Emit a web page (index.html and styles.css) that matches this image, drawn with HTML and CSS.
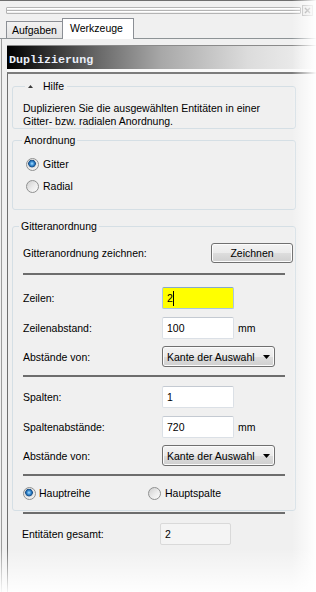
FILE: index.html
```html
<!DOCTYPE html>
<html lang="de">
<head>
<meta charset="utf-8">
<title>Duplizierung</title>
<link rel="stylesheet" href="styles.css">
</head>
<body>
<div class="topbar">
  <div class="grip"></div>
  <div class="close"><svg width="9" height="9" viewBox="0 0 9 9"><path d="M2 2L7 7M7 2L2 7" stroke="#777" stroke-width="1.4"/></svg></div>
</div>
<div class="tabs">
  <div class="tab">Aufgaben</div>
  <div class="tab active">Werkzeuge</div>
</div>
<div class="page">
<div class="title"><span>Duplizierung</span></div>
<div class="panel">
  <fieldset class="group help">
    <legend class="help-legend"><svg class="tri" width="5" height="3" viewBox="0 0 5 3"><polygon points="0,3 2.5,0 5,3" fill="#3a3a3a"/></svg>Hilfe</legend>
    <p class="help-text">Duplizieren Sie die ausgewählten Entitäten in einer<br>Gitter- bzw. radialen Anordnung.</p>
  </fieldset>
  <fieldset class="group arrange">
    <legend>Anordnung</legend>
    <div class="radio-row first"><span class="rb on"></span>Gitter</div>
    <div class="radio-row"><span class="rb"></span>Radial</div>
  </fieldset>
  <fieldset class="group grid">
    <legend>Gitteranordnung</legend>
    <div class="row r-btn"><span class="lbl">Gitteranordnung zeichnen:</span><button class="btn">Zeichnen</button></div>
    <div class="sep s1"></div>
    <div class="row r1"><span class="lbl">Zeilen:</span><span class="field focus">2<span class="caret"></span></span></div>
    <div class="row r2"><span class="lbl">Zeilenabstand:</span><span class="field">100</span><span class="unit">mm</span></div>
    <div class="row r3"><span class="lbl">Abstände von:</span><span class="combo">Kante der Auswahl<svg class="arrow" width="7" height="4" viewBox="0 0 7 4"><polygon points="0,0 7,0 3.5,4" fill="#000"/></svg></span></div>
    <div class="sep s2"></div>
    <div class="row r4"><span class="lbl">Spalten:</span><span class="field">1</span></div>
    <div class="row r5"><span class="lbl">Spaltenabstände:</span><span class="field">720</span><span class="unit">mm</span></div>
    <div class="row r6"><span class="lbl">Abstände von:</span><span class="combo">Kante der Auswahl<svg class="arrow" width="7" height="4" viewBox="0 0 7 4"><polygon points="0,0 7,0 3.5,4" fill="#000"/></svg></span></div>
    <div class="sep s3"></div>
    <div class="row radios"><span class="opt o1"><span class="rb on"></span>Hauptreihe</span><span class="opt o2"><span class="rb"></span>Hauptspalte</span></div>
  </fieldset>
  <div class="sep outer"></div>
  <div class="row total"><span class="lbl">Entitäten gesamt:</span><span class="field ro">2</span></div>
</div>
</div>
<div class="fade-right"></div>
<div class="fade-bottom"></div>
</body>
</html>
```

FILE: styles.css
```css
* { box-sizing: border-box; }
html, body { margin: 0; padding: 0; }
body {
  width: 316px;
  height: 592px;
  overflow: hidden;
  position: relative;
  background: #f0f0f0;
  font-family: "Liberation Sans", Arial, sans-serif;
  font-size: 10.5px;
  color: #000;
}

/* top grip bar */
.topbar {
  height: 18px;
  border-top: 1px solid #6e6e6e;
  display: flex;
  align-items: flex-start;
  padding-left: 6px;
}
.grip {
  margin-top: 6px;
  width: 295px;
  height: 7px;
  border: 1px solid #b4b4b4;
  border-radius: 1px;
  background: linear-gradient(#ffffff 0, #ffffff 1px, #f0f0f0 1px, #f0f0f0 2px, #b4b4b4 2px, #b4b4b4 3px, #ffffff 3px, #ffffff 4px, #f0f0f0 4px);
}
.close {
  margin: 4px 0 0 1px;
  width: 11px;
  height: 11px;
  border: 1px solid #a8a8a8;
  background: #e4e4e4;
  display: flex;
  align-items: center;
  justify-content: center;
}
.close svg { display: block; }

/* tabs */
.tabs {
  height: 21px;
  border-bottom: 1px solid #8d9396;
  display: flex;
  align-items: flex-end;
  padding-left: 6px;
}
.tab {
  height: 17px;
  width: 57px;
  border: 1px solid #8b8f95;
  border-bottom: none;
  background: linear-gradient(#f2f2f2, #e2e2e2);
  padding: 2px 0 0 5px;
  line-height: 13px;
  white-space: nowrap;
}
.tab.active {
  height: 21px;
  width: 72px;
  margin-left: -1px;
  margin-bottom: -1px;
  background: #ffffff;
  padding: 3px 0 0 7px;
  position: relative;
}

/* tab page */
.page {
  margin-left: 1px;
  border-left: 1px solid #9c9c9c;
  height: 553px;
  overflow: hidden;
}

/* title */
.title {
  margin: 6px 0 0 5px;
  height: 27px;
  border-top: 1px solid #8a8a8a;
  border-bottom: 3px solid #f9f9f9;
  background: linear-gradient(to right, #000 0%, #6a6a6a 30%, #a8a8a8 50%, #dcdcdc 78%, #f0f0f0 100%);
  padding: 7px 0 0 2px;
}
.title span {
  display: block;
  font-family: "Liberation Mono", "Courier New", monospace;
  font-weight: bold;
  font-size: 11.7px;
  line-height: 14px;
  color: #e9eef8;
}

/* panel */
.panel {
  border-top: 2px solid #7c7c7c;
  border-left: 1px solid #6e6e6e;
  margin-left: 5px;
  height: 520px;
  overflow: hidden;
  padding-top: 5px;
}

.group {
  margin: 0 0 0 4px;
  width: 284px;
  min-width: 0;
  border: 1px solid #d5dfe5;
  border-radius: 3px;
  padding: 0 0 0 10px;
}
.group legend {
  padding: 0 2px;
  margin-left: -4px;
  line-height: 14px;
}
.group legend.help-legend {
  margin-left: 2px;
  padding: 0 3px;
  display: flex;
  align-items: center;
}
.tri { display: block; margin-right: 10px; }

.help-text {
  margin: 0;
  padding-top: 9px;
  line-height: 13px;
}

.arrange { margin-top: 4px; padding-left: 13px; padding-bottom: 12px; }
.radio-row {
  height: 22px;
  display: flex;
  align-items: center;
  gap: 4px;
}
.radio-row.first { margin-top: 6px; }

.rb {
  width: 13px;
  height: 13px;
  flex: none;
  border-radius: 50%;
  border: 1px solid #8f9090;
  background: linear-gradient(135deg, #cfcfcf 0%, #ececec 55%, #fbfbfb 100%);
}
.rb.on {
  background: radial-gradient(circle at 5px 4.6px, #b4e3ff 0, #58a8e6 1.3px, #2470b6 2.6px, #1a4f86 3.5px, #d9d9d9 4.1px, #ececec 5px, #f6f6f6 100%);
}

.grid { margin-top: 9px; padding-bottom: 6px; }
.row {
  display: flex;
  align-items: center;
  height: 22px;
}
.lbl { flex: 0 0 139px; white-space: nowrap; }
.r-btn { margin-top: 10px; height: 20px; }
.btn {
  margin-left: auto;
  margin-right: 2px;
  width: 82px;
  height: 20px;
  padding: 0;
  border: 1px solid #707070;
  border-radius: 3px;
  background: linear-gradient(#f3f3f3 0%, #ebebeb 50%, #dddddd 51%, #cfcfcf 100%);
  font: inherit;
  color: #000;
  box-shadow: inset 0 0 0 1px #fcfcfc;
}
.sep {
  width: 262px;
  height: 2px;
  background: #6d6d6d;
}
.s1 { margin-top: 10px; }
.r1 { margin-top: 12px; }
.r2 { margin-top: 8px; }
.r3 { margin-top: 7px; height: 21px; }
.s2 { margin-top: 8px; }
.r4 { margin-top: 9px; }
.r5 { margin-top: 8px; }
.r6 { margin-top: 7px; height: 21px; }
.s3 { margin-top: 8px; }
.radios { margin-top: 6px; }

.field {
  width: 72px;
  height: 22px;
  border: 1px solid #dbe0e6;
  border-top-color: #c4cad2;
  border-radius: 2px;
  background: #fff;
  padding-left: 4px;
  display: flex;
  align-items: center;
}
.field.focus {
  background: #ffff00;
  border-color: #a9c5e0;
  border-top-color: #86a8cc;
}
.caret {
  display: inline-block;
  width: 1px;
  height: 15px;
  background: #000;
  margin-left: 0;
}
.unit { margin-left: 4px; }
.combo {
  width: 113px;
  height: 21px;
  border: 1px solid #707070;
  border-radius: 3px;
  background: linear-gradient(#f3f3f3 0%, #ebebeb 50%, #dddddd 51%, #cfcfcf 100%);
  box-shadow: inset 0 0 0 1px #fbfbfb;
  padding: 0 4px 0 4px;
  display: flex;
  align-items: center;
  justify-content: space-between;
  white-space: nowrap;
}
.arrow { display: block; }

.opt { display: flex; align-items: center; gap: 3px; }
.o1 { width: 125px; }
.o2 { gap: 4px; }

.outer { margin: 1px 0 0 15px; }
.total { margin: 9px 0 0 14px; }
.total .lbl { flex-basis: 138px; }
.field.ro {
  width: 71px;
  background: #f4f4f4;
  border-color: #d9d9d9;
}

/* screenshot fade */
.fade-right {
  position: absolute;
  top: 0;
  right: 0;
  width: 24px;
  height: 592px;
  background: linear-gradient(to right, rgba(255,255,255,0), rgba(255,255,255,0.97));
}
.fade-bottom {
  position: absolute;
  left: 0;
  bottom: 0;
  width: 316px;
  height: 44px;
  background: linear-gradient(rgba(255,255,255,0), rgba(255,255,255,0.92));
}
```
